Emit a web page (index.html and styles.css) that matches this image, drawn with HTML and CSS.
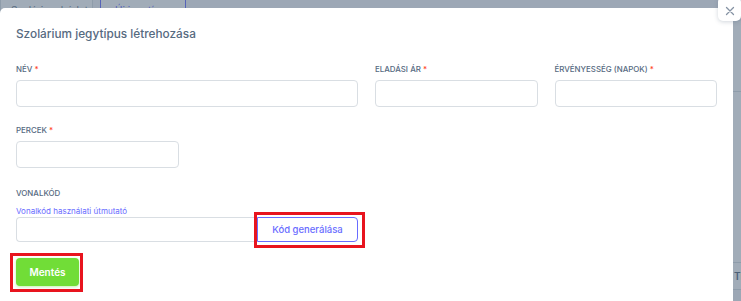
FILE: index.html
```html
<!DOCTYPE html>
<html lang="hu">

<head>
    <meta name="viewport" content="width=device-width, initial-scale=1.0">
    <meta charset="UTF-8">
    <title>Szolárium jegytípus létrehozása</title>
    <link rel="stylesheet" href="styles.css">
</head>

<body>
    <!-- The page behind the modal -->
    <div class="page">
        <div class="toolbar">
            <button class="page-btn page-btn-light">Szolárium bérlet</button>
            <button class="page-btn page-btn-primary">Új jegytípus</button>
        </div>

        <div class="table-card">
            <div class="table-row table-row-top"></div>
            <div class="table-row table-row-head">TÍPUS</div>
        </div>
    </div>

    <!-- Dims the page -->
    <div class="modal-backdrop"></div>

    <!-- The dialog itself -->
    <div class="modal">
        <button class="modal-close" aria-label="Bezárás">
            <svg width="10" height="10" viewBox="0 0 10 10">
                <path d="M1.5 1.5 L8.5 8.5 M8.5 1.5 L1.5 8.5" stroke="#8592a3" stroke-width="1.3" stroke-linecap="round" />
            </svg>
        </button>

        <h5 class="modal-title">Szolárium jegytípus létrehozása</h5>

        <form class="modal-body">
            <div class="form-grid">
                <div class="field field-wide">
                    <label class="field-label">Név <span class="required">*</span></label>
                    <input type="text" class="field-input">
                </div>

                <div class="field">
                    <label class="field-label">Eladási ár <span class="required">*</span></label>
                    <input type="text" class="field-input">
                </div>

                <div class="field">
                    <label class="field-label">Érvényesség (napok) <span class="required">*</span></label>
                    <input type="text" class="field-input">
                </div>

                <div class="field">
                    <label class="field-label">Percek <span class="required">*</span></label>
                    <input type="text" class="field-input">
                </div>
            </div>

            <div class="field field-barcode">
                <label class="field-label">Vonalkód</label>
                <a href="" class="field-help">Vonalkód használati útmutató</a>
                <div class="input-group">
                    <input type="text" class="field-input">
                    <button type="button" class="btn-outline highlight highlight-code">Kód generálása</button>
                </div>
            </div>

            <button type="button" class="btn-save highlight highlight-save">Mentés</button>
        </form>
    </div>
</body>

</html>
```

FILE: styles.css
```css
body {
    margin: 0;
    font-family: Inter, "Liberation Sans", sans-serif;
    background-color: #f5f5f9;
    overflow: hidden;
    height: 301px;
}

/* The page behind the modal */
.page {
    display: flex;
    flex-direction: column;
}

.toolbar {
    display: flex;
    gap: 7px;
    margin-top: -5px;
}

.page-btn {
    font-family: inherit;
    font-size: 10px;
    height: 30px;
    padding: 0 10px;
    border-radius: 5px;
    background-color: #fff;
    white-space: nowrap;
    overflow: hidden;
}

.page-btn-light {
    width: 93px;
    border: 1px solid #d9dee3;
    color: #697a8d;
}

.page-btn-primary {
    width: 86px;
    border: 1px solid #696cff;
    color: #696cff;
}

.table-card {
    margin-top: -4px;
    background-color: #fff;
    display: flex;
    flex-direction: column;
}

.table-row {
    border-bottom: 1px solid #d9dee3;
    height: 26px;
    display: flex;
    align-items: center;
    padding-left: 734px;
    font-size: 10px;
    font-weight: 600;
    color: #566a7f;
}

.table-row-top {
    height: 70px;
}

.table-row-head {
    margin-top: 170px;
    border-top: 1px solid #d9dee3;
}

.modal-backdrop {
    position: fixed;
    inset: 0;
    background-color: rgba(67, 89, 113, 0.5);
}

/* The dialog */
.modal {
    position: absolute;
    top: 8px;
    left: 0;
    width: 733px;
    height: 293px;
    background-color: #fff;
    border-radius: 5px 5px 0 0;
    box-sizing: border-box;
    padding: 18px 16px 0 16px;
}

.modal-close {
    position: absolute;
    top: -11px;
    right: -8px;
    width: 23px;
    height: 24px;
    border: none;
    border-radius: 5px;
    background-color: #fff;
    box-shadow: 0 1px 4px rgba(67, 89, 113, 0.25);
    display: flex;
    align-items: center;
    justify-content: center;
    padding: 3px 0 0 0;
}

.modal-title {
    margin: 0;
    font-size: 11.8px;
    line-height: 16px;
    font-weight: 500;
    color: #566a7f;
}

.modal-body {
    margin-top: 21px;
}

.form-grid {
    display: grid;
    grid-template-columns: repeat(4, minmax(0, 1fr));
    column-gap: 17px;
    row-gap: 17px;
}

.field {
    display: flex;
    flex-direction: column;
    min-width: 0;
}

.field-wide {
    grid-column: span 2;
}

.field-label {
    font-size: 7.9px;
    line-height: 12px;
    font-weight: 500;
    text-transform: uppercase;
    color: #566a7f;
    margin-bottom: 5px;
}

.required {
    color: #ff3e1d;
}

.field-input {
    width: 100%;
    min-width: 0;
    height: 27px;
    box-sizing: border-box;
    border: 1px solid #d9dee3;
    border-radius: 4px;
    background-color: #fff;
    font-family: inherit;
    font-size: 10px;
    padding: 0 9px;
}

.field-barcode {
    margin-top: 19px;
    width: 342px;
}

.field-help {
    font-size: 8px;
    line-height: 12px;
    color: #696cff;
    text-decoration: none;
    margin-top: 1px;
}

.input-group {
    display: flex;
}

.input-group .field-input {
    flex: 1;
    height: 25px;
    border-radius: 4px 0 0 4px;
    border-right: none;
}

.btn-outline {
    flex: none;
    width: 101px;
    height: 25px;
    font-family: inherit;
    font-size: 9.5px;
    font-weight: 500;
    color: #696cff;
    background-color: #fff;
    border: 1px solid #696cff;
    border-radius: 0 4px 4px 0;
}

.btn-save {
    margin-top: 16px;
    width: 63px;
    height: 28px;
    font-family: inherit;
    font-size: 10px;
    font-weight: 600;
    color: #fff;
    background-color: #71dd37;
    border: none;
    border-radius: 4px;
    box-shadow: 0 1px 3px rgba(113, 221, 55, 0.4);
}

/* Red annotation boxes drawn round the two buttons */
.highlight {
    position: relative;
}

.highlight::after {
    content: "";
    position: absolute;
    border: 3px solid #e8141e;
}

.highlight-code::after {
    top: -6px;
    right: -8px;
    bottom: -7px;
    left: -4px;
}

.highlight-save::after {
    top: -5px;
    right: -4px;
    bottom: -6px;
    left: -6px;
}
```
